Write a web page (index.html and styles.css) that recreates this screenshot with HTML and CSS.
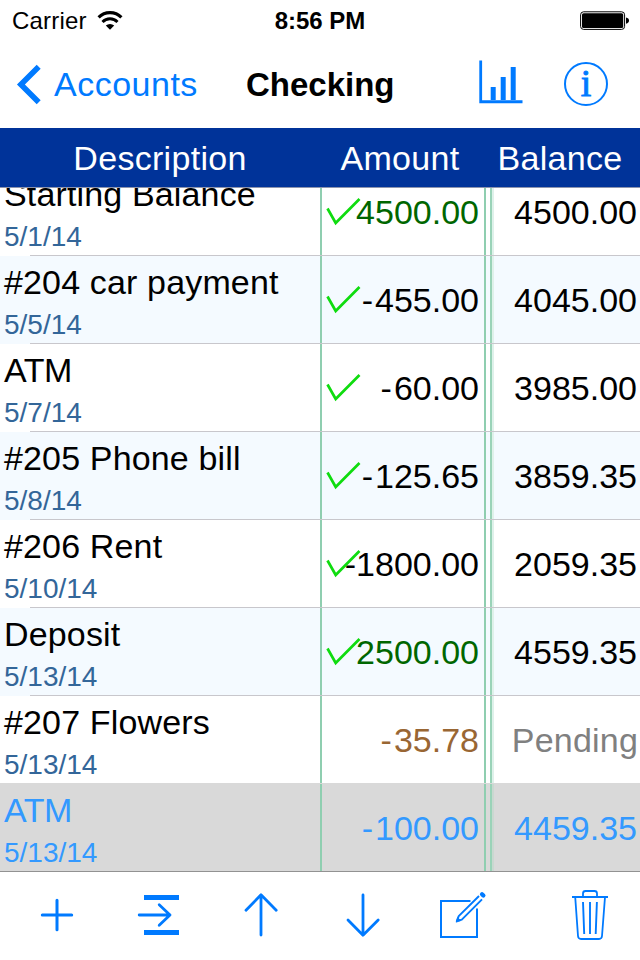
FILE: index.html
```
<!DOCTYPE html>
<html lang="en">
<head>
    <meta charset="UTF-8">
    <meta name="viewport" content="width=device-width, initial-scale=1.0">
    <title>Checking</title>
    <link rel="stylesheet" href="styles.css">
</head>
<body>
    <!-- Shared check mark -->
    <svg class="defs" width="0" height="0">
        <symbol id="check" viewBox="0 0 38 30">
            <path d="M3.5 11.5L11.7 26L35.5 2" fill="none" stroke="#0fdc0f" stroke-width="2.7"/>
        </symbol>
    </svg>

    <div class="status-bar">
        <div class="carrier">
            <span>Carrier</span>
            <svg width="26" height="20" viewBox="0 0 26 20">
                <path d="M1.6 6.4A16 16 0 0 1 24.4 6.4" fill="none" stroke="#000" stroke-width="3.1"/>
                <path d="M5.5 10.9A10.4 10.4 0 0 1 20.5 10.9" fill="none" stroke="#000" stroke-width="2.9"/>
                <path d="M13 18.8L8.8 14.6A6 6 0 0 1 17.2 14.6Z"/>
            </svg>
        </div>
        <div class="time">8:56 PM</div>
        <svg class="battery" width="50" height="20" viewBox="0 0 50 20">
            <rect x="0.6" y="0.8" width="44" height="17.6" rx="3" fill="none" stroke="#000"/>
            <rect x="2" y="2.2" width="41.2" height="14.8" rx="1.6"/>
            <path d="M46 6.4q3 .6 3 3.2t-3 3.2z"/>
        </svg>
    </div>

    <header class="nav">
        <a class="back">
            <svg width="28" height="44" viewBox="0 0 28 44">
                <path d="M24.7 4.7L6.9 22.5L24.7 40.3" fill="none" stroke="#007aff" stroke-width="5.6"/>
            </svg>
            <span>Accounts</span>
        </a>
        <h1>Checking</h1>
        <div class="nav-buttons">
            <svg width="44" height="44" viewBox="0 0 44 44" fill="#007aff">
                <path d="M.3 .5h2.8v39.8h40.4v3H.3z"/>
                <path d="M11.7 27h5v13h-5zM21.7 17h5v23h-5zM31.7 7h5v33h-5z"/>
            </svg>
            <span class="info">i</span>
        </div>
    </header>

    <div class="table-head">
        <div>Description</div>
        <div>Amount</div>
        <div>Balance</div>
    </div>

    <div class="table-body">
        <div class="rows">
            <div class="row">
                <div class="description">
                    <div class="name">Starting Balance</div>
                    <div class="date">5/1/14</div>
                </div>
                <div class="amount credit">4500.00<svg class="check"><use href="#check"/></svg></div>
                <div class="balance">4500.00</div>
            </div>
            <div class="row alt">
                <div class="description">
                    <div class="name">#204 car payment</div>
                    <div class="date">5/5/14</div>
                </div>
                <div class="amount"><span class="minus">-</span>455.00<svg class="check"><use href="#check"/></svg></div>
                <div class="balance">4045.00</div>
            </div>
            <div class="row">
                <div class="description">
                    <div class="name tight">ATM</div>
                    <div class="date">5/7/14</div>
                </div>
                <div class="amount"><span class="minus">-</span>60.00<svg class="check"><use href="#check"/></svg></div>
                <div class="balance">3985.00</div>
            </div>
            <div class="row alt">
                <div class="description">
                    <div class="name">#205 Phone bill</div>
                    <div class="date">5/8/14</div>
                </div>
                <div class="amount"><span class="minus">-</span>125.65<svg class="check"><use href="#check"/></svg></div>
                <div class="balance">3859.35</div>
            </div>
            <div class="row">
                <div class="description">
                    <div class="name">#206 Rent</div>
                    <div class="date">5/10/14</div>
                </div>
                <div class="amount">-1800.00<svg class="check"><use href="#check"/></svg></div>
                <div class="balance">2059.35</div>
            </div>
            <div class="row alt">
                <div class="description">
                    <div class="name">Deposit</div>
                    <div class="date">5/13/14</div>
                </div>
                <div class="amount credit">2500.00<svg class="check"><use href="#check"/></svg></div>
                <div class="balance">4559.35</div>
            </div>
            <div class="row before-selected">
                <div class="description">
                    <div class="name">#207 Flowers</div>
                    <div class="date">5/13/14</div>
                </div>
                <div class="amount uncleared"><span class="minus">-</span>35.78</div>
                <div class="balance pending">Pending</div>
            </div>
            <div class="row selected">
                <div class="description">
                    <div class="name tight">ATM</div>
                    <div class="date">5/13/14</div>
                </div>
                <div class="amount"><span class="minus">-</span>100.00</div>
                <div class="balance">4459.35</div>
            </div>
        </div>
    </div>

    <footer class="toolbar">
        <!-- Add -->
        <svg viewBox="0 0 48 88">
            <path d="M9.3 43H38.7M24 28.2V57.8" stroke-width="3"/>
        </svg>
        <!-- Go to -->
        <svg viewBox="0 0 48 88">
            <path d="M9 25.5H44M9 60.5H44" stroke-width="5" stroke-linecap="butt"/>
            <path d="M4.2 43H35M24.2 32.8L35 43L24.2 53.3" stroke-width="2.8"/>
        </svg>
        <!-- Move up -->
        <svg viewBox="0 0 48 88">
            <path d="M24 63V22.8M9 38.2L24 22.8L39.2 38.2" stroke-width="2.8"/>
        </svg>
        <!-- Move down -->
        <svg viewBox="0 0 48 88">
            <path d="M24 23V63.2M9 48L24 63.2L39.2 48" stroke-width="2.8"/>
        </svg>
        <!-- Edit -->
        <svg class="edit" viewBox="0 0 48 88">
            <path d="M31.5 29H2V65H38V36.5" stroke-width="2" stroke-linecap="butt" stroke-linejoin="miter"/>
            <path d="M40 24L19.7 44.2L17.8 49.2L22.8 47.6L43 27.3" stroke-width="1.9" stroke-linecap="butt"/>
            <path d="M17.3 49.8L18.7 45.7L21.5 48.3Z" fill="#007aff" stroke-width=".8"/>
            <path d="M43 22.2L44.4 23.6" stroke-width="4.2"/>
        </svg>
        <!-- Delete -->
        <svg class="trash" viewBox="0 0 48 88">
            <path d="M6 25H42" stroke-width="2" stroke-linecap="butt"/>
            <path d="M17 25V21.5Q17 19 19.5 19H28.5Q31 19 31 21.5V25M9.2 25L12 64Q12.3 67 15 67H33Q35.7 67 36 64L39 25" stroke-width="1.8"/>
            <path d="M17 30L18.2 62M24 30V62M30.9 30L29.7 62" stroke-width="1.9" stroke-linecap="butt"/>
        </svg>
    </footer>
</body>
</html>
```
FILE: styles.css
```
* {
    box-sizing: border-box;
}
body {
    font-family: "Liberation Sans", Arial, sans-serif;
    font-size: 34px;
    margin: 0;
    width: 640px;
    height: 960px;
    overflow: hidden;
    background: #fff;
    color: #000;
}
svg {
    display: block;
    flex: none;
}
.defs {
    position: absolute;
}

/* Status bar */
.status-bar {
    display: grid;
    grid-template-columns: 1fr auto 1fr;
    align-items: center;
    height: 41px;
    padding: 0 10px 0 12px;
    font-size: 24px;
    line-height: 41px;
}
.carrier {
    display: flex;
    align-items: center;
    gap: 10px;
    letter-spacing: 0.2px;
}
.time {
    margin-left: -2px;
    font-weight: bold;
}
.battery {
    justify-self: end;
}

/* Navigation bar */
.nav {
    display: grid;
    grid-template-columns: 232px auto 1fr;
    align-items: center;
    height: 87px;
    padding: 0 32px 0 14px;
}
.back {
    display: flex;
    align-items: center;
    gap: 12px;
    color: #007aff;
    letter-spacing: 0.5px;
}
.back svg {
    margin-top: -2px;
}
.nav h1 {
    margin: 1px 0 0;
    font-size: 33px;
}
.nav-buttons {
    display: flex;
    justify-content: flex-end;
    align-items: center;
    gap: 41px;
    margin-top: -6px;
}
.info {
    width: 44px;
    height: 44px;
    margin-top: 4px;
    border: 2px solid #007aff;
    border-radius: 50%;
    color: #007aff;
    font-family: "Liberation Serif", serif;
    font-size: 38px;
    line-height: 39px;
    text-align: center;
    -webkit-text-stroke: 0.9px #007aff;
}

/* Transactions */
.table-head {
    display: grid;
    grid-template-columns: 320px 160px 160px;
    height: 60px;
    background: #003399;
    border-bottom: 1px solid #8c94ad;
    color: #fff;
    line-height: 60px;
    text-align: center;
    letter-spacing: 0.3px;
}
.table-body {
    height: 683px;
    overflow: hidden;
}
/* The list is scrolled a little under the header */
.rows {
    margin-top: -20px;
}
.row {
    position: relative;
    display: grid;
    grid-template-columns: 320px 166px 150px;
    column-gap: 4px;
    height: 88px;
    grid-template-columns: 320px 166px 154px;
    column-gap: 0;
}
.row::after {
    content: "";
    position: absolute;
    left: 30px;
    right: 0;
    bottom: 0;
    height: 1px;
    background: #c8c7cc;
}
.alt {
    background: #f4faff;
}
.description {
    padding: 6px 0 0 4px;
    line-height: 40px;
}
.name {
    letter-spacing: 0.15px;
}
.tight {
    letter-spacing: -0.5px;
}
.date {
    margin-top: 3px;
    color: #336699;
    font-size: 28px;
}
.amount, .balance {
    line-height: 88px;
    text-align: right;
    white-space: nowrap;
}
.amount {
    position: relative;
    padding-right: 5px;
    border-left: 2px solid #8fceb0;
    border-right: 2px solid #8fceb0;
}
.minus {
    margin-right: 2px;
}
.balance {
    margin-left: 4px;
    padding-right: 3px;
    border-left: 2px solid #9ad3b8;
    box-shadow: inset 2px 0 #dff1ea;
}
.check {
    position: absolute;
    left: 2px;
    top: 29px;
    width: 38px;
    height: 30px;
}
.credit {
    color: #006600;
}
.uncleared {
    color: #996633;
}
.pending {
    padding-right: 2px;
    color: #808080;
    letter-spacing: 0.2px;
}
.selected {
    background: #d9d9d9;
    color: #3399ff;
}
.selected .date {
    color: #3399ff;
}
.selected .balance {
    box-shadow: inset 2px 0 #c9d8d0;
}
.before-selected::after {
    left: 0;
    background: #d9d9d9;
}

/* Toolbar */
.toolbar {
    display: flex;
    gap: 54px;
    height: 89px;
    padding-left: 33px;
    border-top: 1px solid #929292;
    background: #fff;
}
.toolbar svg {
    width: 48px;
    height: 88px;
    fill: none;
    stroke: #007aff;
    stroke-linecap: round;
    stroke-linejoin: round;
}
.toolbar .edit {
    margin-left: -2px;
}
.toolbar .trash {
    margin-left: 25px;
}
```
